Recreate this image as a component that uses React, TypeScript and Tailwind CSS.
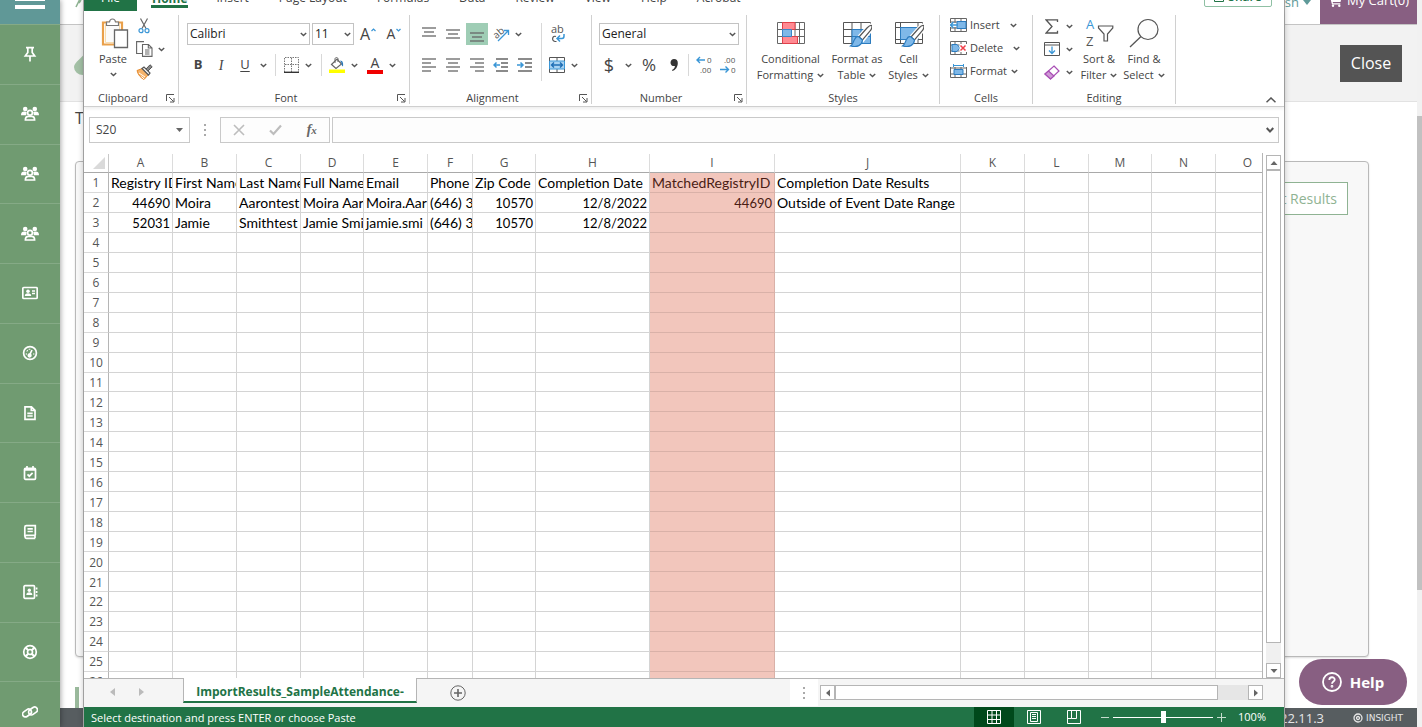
import React from 'react';
import clsx from 'clsx';

type BoxProps = { children?: React.ReactNode; className?: string };

/* ---------- small shared pieces ---------- */

const Chevron = ({ className }: { className?: string }) => (
  <svg viewBox="0 0 7 5" className={clsx('w-[7px] h-[5px] shrink-0', className)} fill="none" stroke="#555" strokeWidth="1.4">
    <path d="M0.8 0.9 3.5 3.6 6.2 0.9" />
  </svg>
);

const DropButton = ({ label }: { label: string }) => (
  <button aria-label={label} className="w-3 h-[22px] flex items-center justify-center">
    <Chevron />
  </button>
);

const IconButton = ({
  label,
  active,
  width = 'w-[22px]',
  className,
  children,
}: BoxProps & { label: string; active?: boolean; width?: string }) => (
  <button
    aria-label={label}
    className={clsx('h-[22px] shrink-0 flex items-center justify-center', width, active && 'bg-[#9fcdb5]', className)}
  >
    {children}
  </button>
);

const Divider = ({ className }: { className?: string }) => <div className={clsx('w-px bg-[#d8d8d8]', className)} />;

const Launcher = ({ label }: { label: string }) => (
  <button aria-label={label} className="w-4 h-3 flex items-center justify-center">
    <svg viewBox="0 0 9 9" className="w-[9px] h-[9px]" fill="none" stroke="#555" strokeWidth="1">
      <path d="M0.5 7V0.5H8M3 3 7.5 7.5M8 4v4H4" />
    </svg>
  </button>
);

const RibbonGroup = ({ title, launcher, className, children }: BoxProps & { title: string; launcher?: boolean }) => (
  <section className={clsx('flex flex-col shrink-0 border-r border-[#d0d0d0]', className)}>
    <div className="flex-1 min-h-0">{children}</div>
    <div className="h-3 shrink-0 flex items-center">
      <span className="flex-1 text-center text-[11px] leading-3">{title}</span>
      {launcher && <Launcher label={`${title} settings`} />}
    </div>
  </section>
);

const RibbonSelect = ({ label, value, className }: { label: string; value: string; className?: string }) => (
  <div className={clsx('relative', className)}>
    <select
      aria-label={label}
      defaultValue={value}
      className="block appearance-none w-full h-[22px] border border-[#c3c3c3] bg-white pl-[2px] text-[12px] leading-4 text-[#222] outline-none"
    >
      <option>{value}</option>
    </select>
    <Chevron className="absolute right-[3px] top-[9px] pointer-events-none" />
  </div>
);

const Lines = ({ rows }: { rows: [number, number, number][] }) => (
  <svg viewBox="0 0 16 16" className="w-4 h-4" stroke="#666" strokeWidth="1.3">
    {rows.map(([y, from, to]) => (
      <line key={y} x1={from} x2={to} y1={y} y2={y} />
    ))}
  </svg>
);

/* ---------- web page behind the spreadsheet ---------- */

const sideIcons: { label: string; art: React.ReactNode }[] = [
  {
    label: 'Pinned',
    art: <path d="M4 1.700h8M5.800 2v4.500L3.300 10h9.400l-2.500-3.500V2M8 10v5.500" />,
  },
  { label: 'Members', art: 'people' },
  { label: 'Groups', art: 'people' },
  { label: 'Teams', art: 'people' },
  {
    label: 'Profiles',
    art: (
      <>
        <rect x="0.8" y="2.5" width="14.4" height="11" rx="1" />
        <path d="M10 6h3M10 8.5h3" />
        <g fill="currentColor" stroke="none">
          <circle cx="6" cy="6.2" r="1.8" />
          <path d="M2.8 11c0-2 1.2-2.8 3.2-2.8S9.200 9 9.200 11z" />
        </g>
      </>
    ),
  },
  {
    label: 'Dashboard',
    art: (
      <>
        <circle cx="8" cy="8" r="6.4" />
        <path d="M7.600 10 10 5M3.800 9h1M4.800 5.500l.8.6M7.500 3.800v1M11.300 9h1" />
        <circle cx="7.600" cy="10.500" r="1.300" fill="currentColor" />
      </>
    ),
  },
  { label: 'Documents', art: <path d="M3 1.800h6.500L13 5.300v9H3zM9.300 2v3.500H13M5.300 8.300h5.400M5.300 11h5.400" /> },
  {
    label: 'Calendar',
    art: (
      <>
        <rect x="2.500" y="3.300" width="11" height="11" rx="1" />
        <path d="M2.500 4.800h11M5 1v3M11 1v3M5.500 9.300l1.800 1.900 3.300-3.400" />
      </>
    ),
  },
  {
    label: 'Courses',
    art: <path d="M13.300 11.300H4.500c-2 0-2 3 0 3h8.800M13 14v-3M2.800 12.500V3.300c0-1 .6-1.600 1.600-1.600h8.900v9.600M5.500 4.800h5.300M5.500 7.500h5.300" />,
  },
  {
    label: 'Contacts',
    art: (
      <>
        <rect x="2" y="1.700" width="10.500" height="12.600" rx="1" />
        <path d="M14.600 3.500v2M14.600 7v2M14.600 10.500v2" />
        <g fill="currentColor" stroke="none">
          <circle cx="7.300" cy="6.200" r="1.700" />
          <path d="M4.300 11c0-2 1-2.800 3-2.800s3 .8 3 2.800z" />
        </g>
      </>
    ),
  },
  {
    label: 'Support',
    art: (
      <>
        <circle cx="8" cy="8" r="6.300" />
        <circle cx="8" cy="8" r="2.500" />
        <path d="M3.500 3.500l2.700 2.700M12.500 3.500 9.800 6.200M3.500 12.500l2.700-2.700M12.500 12.500 9.800 9.800" strokeWidth="2" />
      </>
    ),
  },
  {
    label: 'Links',
    art: (
      <>
        <rect x="0.200" y="6.200" width="9.500" height="5.600" rx="2.800" transform="rotate(-35 5 9)" />
        <rect x="6.300" y="4.200" width="9.500" height="5.600" rx="2.800" transform="rotate(-35 11 7)" />
      </>
    ),
  },
];

const PeopleIcon = () => (
  <svg viewBox="0 0 18 16" className="w-[18px] h-4" fill="currentColor">
    <circle cx="4.200" cy="3" r="2.300" />
    <circle cx="13.800" cy="3" r="2.300" />
    <path d="M0 9.200c0-2.700 1.200-3.700 3.500-3.700 1 0 1.700.2 2.200.6L5.200 9.200zM18 9.200c0-2.700-1.200-3.700-3.500-3.700-1 0-1.700.2-2.200.6l.5 3.100z" />
    <circle cx="9" cy="6.800" r="2.400" fill="none" stroke="currentColor" strokeWidth="1.700" />
    <path d="M4.400 14c0-2.500 1-3.600 3-3.600h3.200c2 0 3 1.100 3 3.600z" fill="none" stroke="currentColor" strokeWidth="1.700" />
  </svg>
);

const Sidebar = () => (
  <nav className="w-[60px] shrink-0 bg-[#709b71] text-white overflow-hidden shadow-[1px_0_5px_#0005] relative">
    <button aria-label="Menu" className="w-full h-6 bg-[#609897] flex flex-col items-center justify-end gap-1 pb-[15px]">
      <span className="w-[30px] h-1 shrink-0 bg-white" />
      <span className="w-[30px] h-1 shrink-0 bg-white" />
    </button>
    <ul className="h-[717px] flex flex-col">
      {sideIcons.map((item) => (
        <li key={item.label} className="flex-1 border-t border-[#85aa86]">
          <a href="#" aria-label={item.label} className="h-full flex items-center justify-center">
            {item.art === 'people' ? (
              <PeopleIcon />
            ) : (
              <svg viewBox="0 0 16 16" className="w-4 h-4" fill="none" stroke="currentColor" strokeWidth="1.700">
                {item.art}
              </svg>
            )}
          </a>
        </li>
      ))}
    </ul>
  </nav>
);

const WebPage = () => (
  <div className="flex-1 flex flex-col min-w-0 bg-white text-[#444]">
    <header className="h-[25px] shrink-0 flex items-start justify-between pl-[14px] border-b border-[#c4c4c4] shadow-[0_1px_3px_#0002]">
      <svg viewBox="0 0 10 8" className="w-[10px] h-2" fill="none" stroke="#8fb393" strokeWidth="1.600">
        <path d="M5.500 0 2 7M7 0 5 3" />
      </svg>
      <div className="flex h-full">
        <button className="flex items-center gap-1 h-3 -mt-1 mr-[9px] text-[13px] leading-3 text-[#5f9a99]">
          sh
          <svg viewBox="0 0 8 5" className="w-2 h-[5px]" fill="#5f9a99">
            <path d="M0 0h8L4 5z" />
          </svg>
        </button>
        <button className="w-[97px] h-full bg-[#885f82] text-white text-[13px] flex items-start justify-center gap-[5px]">
          <svg viewBox="0 0 14 12" className="w-[14px] h-3 -mt-[5px]" fill="#fff">
            <path d="M0 0h2.600l.5 1.500H14L12.500 7H4.700l.3 1.300h7.300v1.200H4L1.800 1.300H0z" />
            <circle cx="5" cy="10.800" r="1.200" />
            <circle cx="11.300" cy="10.800" r="1.200" />
          </svg>
          <span className="leading-4 -mt-2">My Cart(0)</span>
        </button>
      </div>
    </header>
    <div className="h-[77px] shrink-0 bg-[#f2f2f2] border-b border-[#e2e2e2] flex items-center justify-between pl-[14px] pr-[15px]">
      <svg viewBox="0 0 24 24" className="w-6 h-6" fill="#a3c0a5">
        <path d="M12 0c3 5 12 9 12 15a9 9 0 0 1-9 9H9a9 8 0 0 1-9-8C0 11 9 7 12 0z" />
      </svg>
      <button className="w-[62px] h-[37px] bg-[#545454] text-white text-[16px]">Close</button>
    </div>
    <main className="flex-1 flex flex-col pl-[15px] pr-12 min-h-0">
      <p className="h-[38px] mt-[6px] text-[16px] leading-5">T</p>
      <div className="mt-[15px] flex-1 bg-[#f8f8f8] border border-[#b9b9b9] shadow-[0_1px_2px_#0002] rounded-[4px] p-5 flex justify-end items-start">
        <button className="h-[33px] px-[10px] border border-[#8fb393] bg-white text-[#8fb393] text-[14px]">Export Results</button>
      </div>
      <div className="h-[51px] shrink-0 flex items-end">
        <div className="w-1 h-[21px] bg-[#9ab99c]" />
      </div>
    </main>
    <footer className="h-[19px] shrink-0 bg-[#575d60] text-[#e6e6e6] flex items-center justify-end gap-[29px] pr-[14px]">
      <span className="text-[13px] leading-4">22.11.3</span>
      <span className="flex items-center gap-[3px] text-[9px] leading-4 font-['DejaVu_Sans',sans-serif]">
        <svg viewBox="0 0 10 10" className="w-[10px] h-[10px]" fill="none" stroke="#e6e6e6" strokeWidth="1.300">
          <circle cx="5" cy="5" r="4" />
          <circle cx="5" cy="5" r="1.500" />
        </svg>
        INSIGHT
      </span>
    </footer>
  </div>
);

/* ---------- ribbon ---------- */

const tabs = ['Insert', 'Page Layout', 'Formulas', 'Data', 'Review', 'View', 'Help', 'Acrobat'];

const RibbonTabs = () => (
  <div className="h-[11px] flex items-end text-[12px] text-[#444] overflow-hidden shrink-0">
    <button className="w-[53px] h-5 shrink-0 bg-[#217346] text-white leading-3 pb-1.5">File</button>
    <button className="ml-[14px] mb-[3px] h-4 shrink-0 leading-3 border-b-3 border-[#217346] text-[#217346] font-bold px-px">Home</button>
    <div className="flex items-end gap-[30px] ml-7">
      {tabs.map((tab) => (
        <button key={tab} className="h-5 leading-3 pb-1.5 whitespace-nowrap">
          {tab}
        </button>
      ))}
    </div>
    <button className="ml-auto mr-3 mb-[4px] w-[68px] h-5 shrink-0 border border-[#8fc0a4] rounded-[2px] text-[#217346] text-[12px] font-semibold leading-3 flex items-center justify-center gap-1">
      <svg viewBox="0 0 10 10" className="w-[10px] h-[10px]" fill="none" stroke="#217346">
        <path d="M3 2.500H.5v7h9V5M4 6c0-3 2-4 5-4" />
      </svg>
      Share
    </button>
  </div>
);

const ClipboardGroup = () => (
  <RibbonGroup title="Clipboard" launcher className="w-[95px]">
    <div className="flex pl-3">
      <button className="w-[34px] flex flex-col items-center pt-[3px]">
        <svg viewBox="0 0 28 31" className="w-7 h-[31px] ml-1" fill="none">
          <path d="M2 4.500h19v22H2z" fill="#fff" stroke="#e9a04a" strokeWidth="2.200" />
          <path d="M4.500 6.500h14v18h-14z" fill="#fbfbfb" stroke="#f8dcae" />
          <path d="M5.500 7.500V4h3c.5-4 5.500-4 6 0h3v3.500z" fill="#fff" stroke="#777" strokeWidth="1.200" />
          <path d="M13.500 12h13v17.500h-13z" fill="#fff" stroke="#666" strokeWidth="1.300" />
        </svg>
        <span className="text-[11px] leading-4 mt-[2px]">Paste</span>
        <Chevron className="mt-[5px]" />
      </button>
      <div className="flex flex-col gap-px ml-[3px]">
        <IconButton label="Cut">
          <svg viewBox="0 0 12 16" className="w-3 h-4" fill="none" strokeWidth="1.200">
            <path d="M2.500 0.500 8 10.500M9.500 0.500 4 10.500" stroke="#666" />
            <circle cx="3" cy="12.700" r="2" stroke="#3a96d6" />
            <circle cx="9" cy="12.700" r="2" stroke="#3a96d6" />
          </svg>
        </IconButton>
        <div className="flex">
          <IconButton label="Copy">
            <svg viewBox="0 0 17 16" className="w-[17px] h-4" fill="#fff" stroke="#666" strokeWidth="1.100">
              <path d="M6 12.500H.6V.6H8" />
              <path d="M6.500 3.500h6l3.500 3.500v8.400H6.500zM12.300 3.700V7H16M9 9h4.500M9 11h4.500M9 13h4.500" />
            </svg>
          </IconButton>
          <DropButton label="Copy options" />
        </div>
        <IconButton label="Format painter">
          <svg viewBox="0 0 17 16" className="w-[17px] h-4" fill="none">
            <path d="M1 6.500 6.500 4.500l6 6L8 15.500C5 14 2 11 1 6.500z" fill="#f6b36a" stroke="#e58a2d" />
            <path d="M3 9l6 4M5.500 12.500 8 15" stroke="#fff" />
            <path d="M6 4.500 8 3l6 6-1.500 2z" fill="#fff" stroke="#555" strokeWidth="1.200" />
            <path d="M10 5 14 .8l2.200 2L12 7z" fill="#888" stroke="#555" />
          </svg>
        </IconButton>
      </div>
    </div>
  </RibbonGroup>
);

const FontGroup = () => (
  <RibbonGroup title="Font" launcher className="w-[231px]">
    <div className="pl-2 pt-2">
      <div className="flex gap-[2px]">
        <RibbonSelect label="Font family" value="Calibri" className="w-[123px]" />
        <RibbonSelect label="Font size" value="11" className="w-[42px]" />
        <IconButton label="Increase font size" width="w-6" className="text-[16px] leading-5 gap-px">
          A
          <svg viewBox="0 0 5 4" className="w-[5px] h-1 mb-2" fill="none" stroke="#3a96d6" strokeWidth="1.200">
            <path d="M.5 3 2.500 1l2 2" />
          </svg>
        </IconButton>
        <IconButton label="Decrease font size" width="w-6" className="text-[14px] leading-5 gap-px">
          A
          <svg viewBox="0 0 5 4" className="w-[5px] h-1 mb-2" fill="none" stroke="#3a96d6" strokeWidth="1.200">
            <path d="M.5 1 2.500 3l2-2" />
          </svg>
        </IconButton>
      </div>
      <div className="flex items-center mt-[9px]">
        <IconButton label="Bold" className="text-[13px] font-bold">B</IconButton>
        <IconButton label="Italic" width="w-6" className="text-[14px] italic font-['Liberation_Serif',serif]">I</IconButton>
        <IconButton label="Underline" width="w-6" className="text-[13px] underline underline-offset-2">U</IconButton>
        <DropButton label="Underline options" />
        <Divider className="h-[22px] mx-1.5" />
        <IconButton label="Borders" width="w-5">
          <svg viewBox="0 0 16 16" className="w-4 h-4" fill="none" stroke="#777">
            <path d="M.5 15V.5h14V15M7.500 1v14M1 7.500h14" strokeDasharray="1.500 1" />
            <path d="M0 15.300h15" stroke="#333" strokeWidth="1.400" />
          </svg>
        </IconButton>
        <DropButton label="Border options" />
        <Divider className="h-[22px] ml-[7px] mr-1" />
        <IconButton label="Fill colour">
          <svg viewBox="0 0 16 17" className="w-4 h-[17px]" fill="none">
            <path d="M2.500 7.500 8 2l4.500 5L7 11.500z" fill="#fff" stroke="#666" strokeWidth="1.200" />
            <path d="M6 6V2c0-2 3-2 3 0v3" stroke="#666" />
            <path d="M11 3.500c3 0 3.500 3 3 6-1.500-1-1.500-2-1.500-3.500z" fill="#2b78b8" />
            <path d="M0 12.500h16V16H0z" fill="#ff0" />
          </svg>
        </IconButton>
        <DropButton label="Fill colour options" />
        <IconButton label="Font colour" className="ml-1 flex-col text-[14px] leading-3">
          A
          <span className="w-4 h-1 bg-[#f00000] mt-px" />
        </IconButton>
        <DropButton label="Font colour options" />
      </div>
    </div>
  </RibbonGroup>
);

const AlignmentGroup = () => (
  <RibbonGroup title="Alignment" launcher className="w-[182px]">
    <div className="flex pl-2 pt-2">
      <div className="flex flex-col gap-[9px]">
        <div className="flex gap-[2px]">
          <IconButton label="Top align"><Lines rows={[[2, 1, 15], [6, 3, 13], [10, 1, 15]]} /></IconButton>
          <IconButton label="Middle align"><Lines rows={[[4, 1, 15], [8, 3, 13], [12, 1, 15]]} /></IconButton>
          <IconButton label="Bottom align" active><Lines rows={[[7, 1, 15], [11, 3, 13], [15, 1, 15]]} /></IconButton>
          <div className="flex">
            <IconButton label="Orientation">
              <svg viewBox="0 0 17 16" className="w-[17px] h-4">
                <text x="0" y="10" fontSize="10" fill="#555" transform="rotate(-40 6 7)">ab</text>
                <path d="M5 15 15 5M11 4.500h4.500V9" fill="none" stroke="#3a96d6" strokeWidth="1.300" />
              </svg>
            </IconButton>
            <DropButton label="Orientation options" />
          </div>
        </div>
        <div className="flex gap-[2px]">
          <IconButton label="Align left"><Lines rows={[[2, 1, 15], [6, 1, 10], [10, 1, 15], [14, 1, 10]]} /></IconButton>
          <IconButton label="Centre"><Lines rows={[[2, 1, 15], [6, 3, 13], [10, 1, 15], [14, 3, 13]]} /></IconButton>
          <IconButton label="Align right"><Lines rows={[[2, 1, 15], [6, 6, 15], [10, 1, 15], [14, 6, 15]]} /></IconButton>
          <IconButton label="Decrease indent">
            <svg viewBox="0 0 16 16" className="w-4 h-4" fill="none" stroke="#666" strokeWidth="1.300">
              <path d="M3 2h12M8 6h7M8 10h7M3 14h12" />
              <path d="M7 8H1M3.500 5.500 1 8l2.500 2.500" stroke="#3a96d6" strokeWidth="1.500" />
            </svg>
          </IconButton>
          <IconButton label="Increase indent">
            <svg viewBox="0 0 16 16" className="w-4 h-4" fill="none" stroke="#666" strokeWidth="1.300">
              <path d="M1 2h14M8 6h7M8 10h7M1 14h14" />
              <path d="M0 8h6M3.500 5.500 6 8l-2.500 2.500" stroke="#3a96d6" strokeWidth="1.500" />
            </svg>
          </IconButton>
        </div>
      </div>
      <Divider className="h-[58px] ml-[5px] mr-1" />
      <div className="flex flex-col gap-[9px]">
        <IconButton label="Wrap text">
          <svg viewBox="0 0 15 18" className="w-[15px] h-[18px]">
            <text x="1" y="8" fontSize="11" fill="#555">ab</text>
            <path d="M6 11.500c-3.500-1.500-5 4.500-1 5h1.500" fill="none" stroke="#555" strokeWidth="1.200" />
            <path d="M14 9v2c0 2-1 2.500-2 2.500H7.500M10 10.500l-3 3 3 3" fill="none" stroke="#3a96d6" strokeWidth="1.500" />
          </svg>
        </IconButton>
        <div className="flex">
          <IconButton label="Merge and centre">
            <svg viewBox="0 0 16 16" className="w-4 h-4" fill="none" stroke="#555">
              <path d="M.5.500h15v15H.5zM8 .5v15" fill="#fff" />
              <path d="M.5 4h15v8H.5z" fill="#a9d3f2" stroke="#3a96d6" />
              <path d="M2.500 8h11M5 5.500 2.500 8 5 10.500M11 5.500 13.500 8 11 10.500" stroke="#1f6fb5" strokeWidth="1.400" />
            </svg>
          </IconButton>
          <DropButton label="Merge options" />
        </div>
      </div>
    </div>
  </RibbonGroup>
);

const NumberGroup = () => (
  <RibbonGroup title="Number" launcher className="w-[155px]">
    <div className="pl-[7px] pt-2">
      <RibbonSelect label="Number format" value="General" className="w-[140px]" />
      <div className="flex items-center mt-[9px]">
        <IconButton label="Currency" width="w-5" className="text-[18px]">$</IconButton>
        <div className="ml-[3px]"><DropButton label="Currency options" /></div>
        <IconButton label="Percent" className="ml-1 text-[17px]">%</IconButton>
        <IconButton label="Comma style" className="ml-[3px]">
          <svg viewBox="0 0 8 12" className="w-2 h-3" fill="#333">
            <path d="M4 0c2.500 0 3.800 1.500 3.800 4 0 4-2.300 7-5.300 8l-.5-1c2-1 2.800-2.300 2.900-4C2.500 7.500.5 6 .5 3.700.5 1.500 2 0 4 0z" />
          </svg>
        </IconButton>
        <Divider className="h-[22px] ml-[3px] mr-1" />
        <IconButton label="Increase decimal">
          <svg viewBox="0 0 16 18" className="w-4 h-[18px]" fill="none">
            <path d="M9 4H1.500M4 1 1 4l3 3" stroke="#3a96d6" strokeWidth="1.400" />
            <text x="11" y="7" fontSize="8" fill="#555">0</text>
            <text x="4" y="17" fontSize="8" fill="#555">.00</text>
          </svg>
        </IconButton>
        <IconButton label="Decrease decimal" className="ml-[2px]">
          <svg viewBox="0 0 16 18" className="w-4 h-[18px]" fill="none">
            <text x="4" y="7" fontSize="8" fill="#555">.00</text>
            <text x="11" y="17" fontSize="8" fill="#555">0</text>
            <path d="M0 13.500h8M5.500 10.500l3 3-3 3" stroke="#3a96d6" strokeWidth="1.400" />
          </svg>
        </IconButton>
      </div>
    </div>
  </RibbonGroup>
);

const Brush = () => (
  <>
    <path d="M28.500 7c3 0 2 3 0 6L21 22.500 16.500 19 25 9.500z" fill="#fff" stroke="#fff" strokeWidth="3" />
    <path d="M29.500 7.500c1 1 .5 2.500-1 5L20.500 22 17 19l8-9c2-2 3.500-3 4.500-2.500z" fill="#fff" stroke="#555" strokeWidth="1.200" />
    <path d="M16.500 18.500 20.500 22c-.5 5.500-5 7.500-12 6 3-2 2.500-4 4-6.500 1-2 2.500-3.200 4-3z" fill="#7fb8e8" stroke="#2b7cc0" strokeWidth="1.200" />
  </>
);

const BigButton = ({ lines, icon, className }: { lines: [string, string]; icon: React.ReactNode; className?: string }) => (
  <button className={clsx('flex flex-col items-center text-[11px] leading-4', className)}>
    <svg viewBox="0 0 30 30" className="w-[30px] h-[30px] mb-[3px]" fill="none">
      {icon}
    </svg>
    <span className="whitespace-nowrap">{lines[0]}</span>
    <span className="flex items-center gap-1 whitespace-nowrap">
      {lines[1]}
      <Chevron />
    </span>
  </button>
);

const StylesGroup = () => (
  <RibbonGroup title="Styles" className="w-[193px]">
    <div className="flex pl-[5px] pt-[3px]">
      <BigButton
        className="w-[77px]"
        lines={['Conditional', 'Formatting']}
        icon={
          <>
            <path d="M1.500 4.500h27v21h-27zM6.500 4.500v21M19 4.500v21M23.500 4.500v21M1.500 11.500h27M1.500 18.500h27" stroke="#666" />
            <path d="M6.500 4.500H19v7H6.500zM6.500 18.500h15v7h-15z" fill="#ff8a92" stroke="#e0404a" />
            <path d="M6.500 11.500h9v7h-9z" fill="#7fb8e8" stroke="#3a86c8" />
          </>
        }
      />
      <BigButton
        className="w-[56px]"
        lines={['Format as', 'Table']}
        icon={
          <>
            <path d="M1.500 4.500h27v21h-27zM10 4.500v21M19 4.500v21M1.500 11.500h27M1.500 18.500h27" stroke="#555" />
            <path d="M10 11.500h18.500v14H10z" fill="#7fb8e8" stroke="#2b7cc0" />
            <path d="M19 11.500v14M10 18.500h18" stroke="#2b7cc0" />
            <Brush />
          </>
        }
      />
      <BigButton
        className="w-[47px]"
        lines={['Cell', 'Styles']}
        icon={
          <>
            <path d="M1.500 4.500h27v21h-27zM6.500 4.500v21M1.500 9.500h27M1.500 21.500h27M24 4.500v21" stroke="#555" />
            <path d="M6.500 9.500H24v12H6.500z" fill="#7fb8e8" stroke="#2b7cc0" />
            <Brush />
          </>
        }
      />
    </div>
  </RibbonGroup>
);

const cellActions: { label: string; gap: string; art: React.ReactNode }[] = [
  {
    label: 'Insert',
    gap: 'ml-2.5',
    art: (
      <>
        <path d="M7 3.500h9v7H7z" fill="#7fb8e8" stroke="#2b7cc0" />
        <path d="M0 5h6v4H0z" fill="#fff" />
        <path d="M8 7H.500M3.500 4 .5 7l3 3" stroke="#3a96d6" strokeWidth="1.500" />
      </>
    ),
  },
  {
    label: 'Delete',
    gap: 'ml-2.5',
    art: (
      <>
        <path d="M2 3.500h5l3 3.500-3 3.500H2z" fill="#7fb8e8" stroke="#2b7cc0" />
        <path d="M9.500 3h7.500v8h-7.500z" fill="#fff" />
        <path d="M10.500 4.500l5 5M15.500 4.500l-5 5" stroke="#f0404a" strokeWidth="1.500" />
      </>
    ),
  },
  {
    label: 'Format',
    gap: 'ml-1',
    art: (
      <>
        <path d="M0 0h17v3H0z" fill="#fff" />
        <path d="M4 5.500h9v5H4z" fill="#7fb8e8" stroke="#2b7cc0" />
        <path d="M3.500 0v3M13.500 0v3M4 1.500h9" stroke="#3a96d6" />
      </>
    ),
  },
];

const CellsGroup = () => (
  <RibbonGroup title="Cells" className="w-[93px]">
    <div className="flex flex-col gap-[7px] pl-[10px] pt-[2px]">
      {cellActions.map((action) => (
        <button key={action.label} className="h-4 flex items-center text-[11px] leading-4">
          <svg viewBox="0 0 17 15" className="w-[17px] h-[15px] mr-[3px]" fill="none">
            <path d="M.5.500h16v13H.5zM5 .5v13M11 .5v13M.5 4h16M.5 10h16" stroke="#666" />
            {action.art}
          </svg>
          {action.label}
          <Chevron className={action.gap} />
        </button>
      ))}
    </div>
  </RibbonGroup>
);

const EditingGroup = () => (
  <RibbonGroup title="Editing" className="w-[143px]">
    <div className="flex pl-2">
      <div className="flex flex-col gap-px">
        <div className="flex">
          <IconButton label="AutoSum">
            <svg viewBox="0 0 14 15" className="w-[14px] h-[15px]" fill="none" stroke="#555" strokeWidth="1.300">
              <path d="M12.500 3V.8H1L7 7.500 1 14h11.500v-2.200" />
            </svg>
          </IconButton>
          <DropButton label="AutoSum options" />
        </div>
        <div className="flex">
          <IconButton label="Fill">
            <svg viewBox="0 0 16 14" className="w-4 h-[14px]" fill="none" stroke="#555">
              <path d="M.5.500h15v13H.5zM.5 3h15" />
              <path d="M8 4.500v7M5 8.500l3 3 3-3" stroke="#3a96d6" strokeWidth="1.300" />
            </svg>
          </IconButton>
          <DropButton label="Fill options" />
        </div>
        <div className="flex">
          <IconButton label="Clear">
            <svg viewBox="0 0 16 15" className="w-4 h-[15px]" fill="none" stroke="#a94fb5" strokeWidth="1.200">
              <path d="M10 1 15 6 6.500 14 1 9z" fill="#fff" />
              <path d="M4.500 6 10 11l-3.500 3L1 9z" fill="#cf9ad6" />
            </svg>
          </IconButton>
          <DropButton label="Clear options" />
        </div>
      </div>
      <BigButton
        className="w-[46px] ml-px pt-[3px]"
        lines={['Sort &', 'Filter']}
        icon={
          <>
            <text x="2" y="11" fontSize="13" fill="#3a96d6">A</text>
            <text x="2" y="28" fontSize="13" fill="#555">Z</text>
            <path d="M14.500 8h14.300v2L23.500 16v7h-3.500v-7L14.500 10z" stroke="#555" strokeWidth="1.200" />
          </>
        }
      />
      <BigButton
        className="w-11 pt-[3px]"
        lines={['Find &', 'Select']}
        icon={
          <>
            <circle cx="19" cy="11.500" r="10" stroke="#555" strokeWidth="1.200" fill="#fdfdfd" />
            <path d="M12 18.500 1 29" stroke="#555" strokeWidth="1.300" />
          </>
        }
      />
    </div>
  </RibbonGroup>
);

const Ribbon = () => (
  <div className="h-24 shrink-0 flex pt-1 pb-[2px] border-b border-[#cfcfcf] shadow-[0_2px_3px_#0001] relative">
    <ClipboardGroup />
    <FontGroup />
    <AlignmentGroup />
    <NumberGroup />
    <StylesGroup />
    <CellsGroup />
    <EditingGroup />
    <button aria-label="Collapse ribbon" className="ml-auto self-end w-[26px] h-2 flex items-center justify-center">
      <svg viewBox="0 0 10 6" className="w-[10px] h-1.5" fill="none" stroke="#555" strokeWidth="1.500">
        <path d="M.5 5.300 5 1l4.500 4.300" />
      </svg>
    </button>
  </div>
);

/* ---------- formula bar ---------- */

const Dots = () => (
  <svg viewBox="0 0 2 12" className="w-[2px] h-3" fill="#aaa">
    <path d="M0 0h2v2H0zM0 5h2v2H0zM0 10h2v2H0z" />
  </svg>
);

const FormulaBar = () => (
  <div className="flex items-center shrink-0 mt-[10px] h-[26px] pl-[5px] pr-[5px]">
    <div className="w-[101px] h-full border border-[#c9c9c9] flex items-center pr-[6px]">
      <input aria-label="Name box" defaultValue="S20" className="min-w-0 flex-1 pl-1.5 text-[12px] text-[#444] outline-none" />
      <svg viewBox="0 0 7 4" className="w-[7px] h-1" fill="#666">
        <path d="M0 0h7L3.500 4z" />
      </svg>
    </div>
    <div className="w-[30px] flex justify-center"><Dots /></div>
    <div className="w-[110px] h-full border border-[#c9c9c9] bg-[#fdfdfd] flex items-center justify-around">
      <button aria-label="Cancel">
        <svg viewBox="0 0 12 12" className="w-3 h-3" stroke="#bdbdbd" strokeWidth="1.600">
          <path d="M1 1l10 10M11 1 1 11" />
        </svg>
      </button>
      <button aria-label="Enter">
        <svg viewBox="0 0 13 12" className="w-[13px] h-3" fill="none" stroke="#bdbdbd" strokeWidth="2.200">
          <path d="M1 6.500 4.500 10 12 1.500" />
        </svg>
      </button>
      <button aria-label="Insert function" className="font-['Liberation_Serif',serif] italic font-bold text-[14px] leading-5 text-[#666]">
        f<span className="text-[11px]">x</span>
      </button>
    </div>
    <div className="flex-1 ml-[2px] h-full border border-[#c9c9c9] bg-[#fdfdfd] flex items-center pr-1">
      <input aria-label="Formula" className="flex-1 min-w-0 px-2 text-[12px] outline-none" />
      <svg viewBox="0 0 8 6" className="w-2 h-1.5" fill="none" stroke="#555" strokeWidth="2">
        <path d="M.7 1 4 4.500 7.300 1" />
      </svg>
    </div>
  </div>
);

/* ---------- grid ---------- */

const columns = [
  { name: 'A', width: 'w-[64px]' },
  { name: 'B', width: 'w-[64px]' },
  { name: 'C', width: 'w-[64px]' },
  { name: 'D', width: 'w-[63px]' },
  { name: 'E', width: 'w-[64px]' },
  { name: 'F', width: 'w-[45px]' },
  { name: 'G', width: 'w-[63px]' },
  { name: 'H', width: 'w-[114px]' },
  { name: 'I', width: 'w-[125px]' },
  { name: 'J', width: 'w-[186px]' },
  { name: 'K', width: 'w-[64px]' },
  { name: 'L', width: 'w-[64px]' },
  { name: 'M', width: 'w-[63px]' },
  { name: 'N', width: 'w-[64px]' },
  { name: 'O', width: 'w-[64px]' },
];

const data = [
  ['Registry ID', 'First Name', 'Last Name', 'Full Name', 'Email', 'Phone', 'Zip Code', 'Completion Date', 'MatchedRegistryID', 'Completion Date Results'],
  ['44690', 'Moira', 'Aarontest', 'Moira Aar', 'Moira.Aar', '(646) 3', '10570', '12/8/2022', '44690', 'Outside of Event Date Range'],
  ['52031', 'Jamie', 'Smithtest', 'Jamie Smi', 'jamie.smi', '(646) 3', '10570', '12/8/2022'],
];

const isNumeric = (value: string) => /^[\d/]+$/.test(value);

const Grid = () => (
  <div className="flex-1 min-w-0 overflow-hidden border-r border-[#b5b5b5] pt-px">
    <table className="table-fixed border-separate border-spacing-0 w-[1196px] h-[538px]">
      <colgroup>
        <col className="w-[25px]" />
        {columns.map((col) => (
          <col key={col.name} className={col.width} />
        ))}
      </colgroup>
      <thead>
        <tr className="text-[12px] leading-4 text-[#555]">
          <th className="h-[19px] p-0 border-r border-b border-r-[#c8c8c8] border-b-[#a9a9a9]">
            <svg viewBox="0 0 12 12" className="w-3 h-3 ml-auto mr-[3px]" fill="#dadada">
              <path d="M12 0v12H0z" />
            </svg>
          </th>
          {columns.map((col) => (
            <th key={col.name} scope="col" className="h-[19px] p-0 font-normal border-r border-b border-r-[#dcdcdc] border-b-[#a9a9a9]">
              {col.name}
            </th>
          ))}
        </tr>
      </thead>
      <tbody>
        {Array.from({ length: 26 }, (_, row) => (
          <tr key={row}>
            <th scope="row" className="h-[19px] p-0 pt-[2px] font-normal text-[12px] leading-4 text-[#555] border-r border-b border-r-[#b5b5b5] border-b-[#d9d9d9]">
              {row + 1}
            </th>
            {columns.map((col, index) => {
              const value = data[row]?.[index] ?? '';
              return (
                <td
                  key={col.name}
                  className={clsx(
                    'h-[19px] px-[2px] pt-px pb-0 overflow-hidden whitespace-nowrap border-r border-b leading-4 font-["Lato",sans-serif]',
                    isNumeric(value) ? 'text-right text-[13px]' : 'text-[14px]',
                    col.name === 'I' ? 'bg-[#f2c6bc] text-[#4a1c14] border-[#d9b1a8]' : 'text-black border-[#d4d4d4]'
                  )}
                >
                  {value}
                </td>
              );
            })}
          </tr>
        ))}
      </tbody>
    </table>
  </div>
);

const ScrollArrow = ({ label, path, className }: { label: string; path: string; className?: string }) => (
  <button aria-label={label} className={clsx('w-[15px] h-[15px] shrink-0 bg-white border border-[#b5b5b5] flex items-center justify-center', className)}>
    <svg viewBox="0 0 8 8" className="w-2 h-2" fill="#666">
      <path d={path} />
    </svg>
  </button>
);

const VerticalScroll = () => (
  <div className="w-[15px] ml-[3px] mr-[3px] mt-[2px] flex flex-col shrink-0 bg-[#f0f0f0]">
    <ScrollArrow label="Scroll up" path="M4 2 7.500 6h-7z" />
    <div className="flex-1 bg-white border border-[#b5b5b5]" />
    <div className="h-5" />
    <ScrollArrow label="Scroll down" path="M4 6 .5 2h7z" />
  </div>
);

const SheetBar = () => (
  <div className="h-[29px] shrink-0 flex items-start bg-[#f5f5f5]">
    <div className="w-[99px] h-[26px] border-t border-[#b5b5b5] flex items-center justify-center gap-6 pr-[14px]">
      <button aria-label="Previous sheet">
        <svg viewBox="0 0 5 8" className="w-[5px] h-2" fill="#bbb"><path d="M5 0v8L0 4z" /></svg>
      </button>
      <button aria-label="Next sheet">
        <svg viewBox="0 0 5 8" className="w-[5px] h-2" fill="#bbb"><path d="M0 0v8l5-4z" /></svg>
      </button>
    </div>
    <button className="w-[234px] h-[25px] pt-1 bg-white border-x border-x-[#b5b5b5] border-b-2 border-b-[#217346] text-[12px] leading-4 font-bold text-[#217346] whitespace-nowrap">
      ImportResults_SampleAttendance-
    </button>
    <div className="flex-1 h-[28px] border-t border-[#b5b5b5] flex items-center">
      <button aria-label="New sheet" className="ml-[33px]">
        <svg viewBox="0 0 16 16" className="w-4 h-4" fill="none" stroke="#666">
          <circle cx="8" cy="8" r="7.200" />
          <path d="M8 4v8M4 8h8" strokeWidth="1.600" />
        </svg>
      </button>
      <div className="ml-auto w-7 h-full bg-white flex items-center justify-center"><Dots /></div>
      <div className="ml-[2px] w-[443px] h-[15px] flex bg-[#e6e6e6]">
        <ScrollArrow label="Scroll left" path="M2 4 6 .5v7z" />
        <div className="flex-1 bg-white border border-[#b5b5b5]" />
        <div className="w-[30px]" />
        <ScrollArrow label="Scroll right" path="M6 4 2 .5v7z" />
      </div>
      <div className="w-[21px]" />
    </div>
  </div>
);

const StatusBar = () => (
  <div className="h-5 shrink-0 flex items-center bg-[#217346] text-white text-[11px] leading-4 pl-[7px] pr-[18px]">
    <span className="pt-px">Select destination and press ENTER or choose Paste</span>
    <div className="ml-auto flex items-center h-full">
      <button aria-label="Normal view" className="w-10 h-full bg-[#00491b] flex items-center justify-center">
        <svg viewBox="0 0 14 14" className="w-[14px] h-[14px]" fill="none" stroke="#fff">
          <path d="M.5.500h13v13H.5zM5 .5v13M9.500 .5v13M.5 5h13M.5 9.500h13" />
        </svg>
      </button>
      <button aria-label="Page layout view" className="w-10 h-full flex items-center justify-center">
        <svg viewBox="0 0 14 14" className="w-[14px] h-[14px]" fill="none" stroke="#fff">
          <path d="M.5.500h13v13H.5zM3.500 2.500h7v9h-7zM5 4.500h4M5 6.500h4M5 8.500h4" />
        </svg>
      </button>
      <button aria-label="Page break view" className="w-10 h-full flex items-center justify-center">
        <svg viewBox="0 0 14 14" className="w-[14px] h-[14px]" fill="none" stroke="#fff">
          <path d="M.5.500h13v13H.5zM4.500 .5v8h5v-8M.5 8.500h4" />
        </svg>
      </button>
      <button aria-label="Zoom out" className="w-4 ml-[3px] h-full flex items-center justify-center">
        <span className="w-2 h-px bg-[#c5dccd]" />
      </button>
      <input
        type="range"
        aria-label="Zoom"
        defaultValue={50}
        className="appearance-none bg-transparent w-[100px] h-3 [&::-webkit-slider-runnable-track]:h-px [&::-webkit-slider-runnable-track]:bg-white [&::-webkit-slider-thumb]:appearance-none [&::-webkit-slider-thumb]:w-[5px] [&::-webkit-slider-thumb]:h-3 [&::-webkit-slider-thumb]:-mt-[6px] [&::-webkit-slider-thumb]:bg-white"
      />
      <button aria-label="Zoom in" className="w-4 h-full flex items-center justify-center">
        <svg viewBox="0 0 9 9" className="w-[9px] h-[9px]" stroke="#c5dccd">
          <path d="M4.500 0v9M0 4.500h9" />
        </svg>
      </button>
      <span className="w-[37px] text-right">100%</span>
    </div>
  </div>
);

const SpreadsheetWindow = () => (
  <div className="absolute inset-y-0 left-[83px] right-[137px] flex flex-col bg-white text-[#444] border-x border-[#a0a0a0] shadow-[0_0_6px_#0003]">
    <RibbonTabs />
    <Ribbon />
    <FormulaBar />
    <div className="flex-1 min-h-0 flex mt-[10px]">
      <Grid />
      <VerticalScroll />
    </div>
    <SheetBar />
    <StatusBar />
  </div>
);

export default function App() {
  return (
    <div className="relative h-screen overflow-hidden flex font-['Open_Sans','Noto_Sans',sans-serif]">
      <Sidebar />
      <WebPage />
      <div className="w-[5px] shrink-0 bg-[#f1f1f1] pt-[116px]">
        <div className="h-[474px] bg-[#c1c1c1]" />
      </div>
      <SpreadsheetWindow />
      <button className="absolute right-[15px] bottom-[22px] w-[108px] h-[46px] rounded-full bg-[#885f82] text-white text-[15px] font-bold flex items-center justify-center gap-2">
        <svg viewBox="0 0 20 20" className="w-5 h-5" fill="none" stroke="#fff" strokeWidth="1.800">
          <circle cx="10" cy="10" r="9" />
          <path d="M7.300 8c0-3.700 5.400-3.500 5.400-.3 0 1.800-2.700 2-2.700 4" />
          <circle cx="10" cy="14.300" r=".5" />
        </svg>
        Help
      </button>
    </div>
  );
}
